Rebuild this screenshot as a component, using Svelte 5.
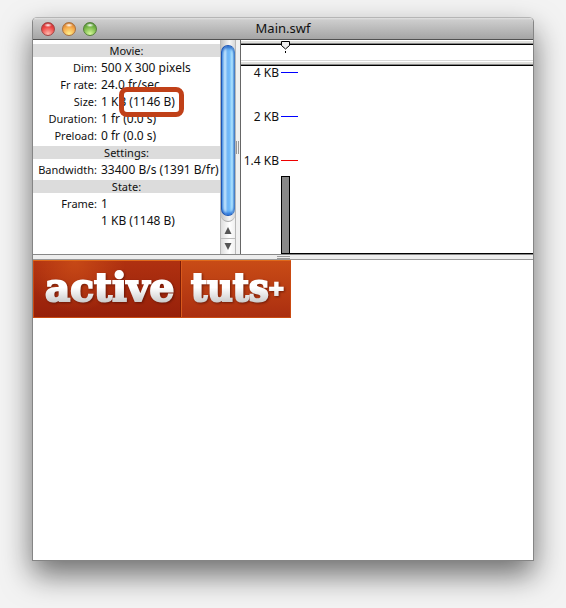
<script lang="ts">
  const groups = [
    {
      title: 'Movie:',
      rows: [
        { label: 'Dim:', value: '500 X 300 pixels' },
        { label: 'Fr rate:', value: '24.0 fr/sec' },
        { label: 'Size:', value: '1 KB', marked: '(1146 B)' },
        { label: 'Duration:', value: '1 fr (0.0 s)' },
        { label: 'Preload:', value: '0 fr (0.0 s)' }
      ]
    },
    {
      title: 'Settings:',
      rows: [{ label: 'Bandwidth:', value: '33400 B/s (1391 B/fr)' }]
    },
    {
      title: 'State:',
      rows: [
        { label: 'Frame:', value: '1' },
        { label: '', value: '1 KB (1148 B)' }
      ]
    }
  ];

  const scale = [
    { label: '4 KB', limit: false },
    { label: '2 KB', limit: false },
    { label: '1.4 KB', limit: true }
  ];

  // height of each streamed frame, in pixels
  const frames = [78];
</script>

<main class="window">
  <header class="titlebar">
    <div class="lights">
      <button class="light close" aria-label="Close"></button>
      <button class="light minimize" aria-label="Minimize"></button>
      <button class="light zoom" aria-label="Zoom"></button>
    </div>
    <h1>Main.swf</h1>
  </header>

  <div class="profiler">
    <section class="info">
      {#each groups as group}
        <h2>{group.title}</h2>
        <dl>
          {#each group.rows as row}
            <dt>{row.label}</dt>
            <dd>
              {row.value}
              {#if row.marked}
                <span class="marked">{row.marked}</span>
              {/if}
            </dd>
          {/each}
        </dl>
      {/each}
    </section>

    <div class="scrollbar">
      <div class="track">
        <div class="thumb"></div>
      </div>
      <button class="arrow" aria-label="Scroll up">
        <svg width="8" height="7" viewBox="0 0 8 7"><path d="M4 0L7.5 7H.5z" /></svg>
      </button>
      <button class="arrow" aria-label="Scroll down">
        <svg width="8" height="7" viewBox="0 0 8 7"><path d="M4 7L7.5 0H.5z" /></svg>
      </button>
    </div>

    <div class="divider"><span class="grip"></span></div>

    <section class="graph">
      <div class="rule"></div>
      <div class="timeline">
        <svg class="playhead" width="9" height="12" viewBox="0 0 9 12">
          <path d="M.5 .5H8.5V4.5L4.5 8L.5 4.5z" fill="#eee" stroke="#000" />
          <path d="M4.5 10V12" stroke="#000" />
        </svg>
      </div>
      <div class="rule"></div>
      <div class="chart">
        <div class="scale">
          {#each scale as mark}
            <div class="mark">
              <span>{mark.label}</span>
              <i class:limit={mark.limit}></i>
            </div>
          {/each}
        </div>
        <div class="bars">
          {#each frames as height}
            <div class="bar" style:height="{height}px"></div>
          {/each}
          <div class="baseline"></div>
        </div>
      </div>
    </section>
  </div>

  <div class="splitter"><span class="grip"></span></div>

  <div class="stage">
    <svg class="banner" width="258" height="58" viewBox="0 0 258 58" role="img" aria-label="active tuts+">
      <defs>
        <radialGradient id="glow" gradientUnits="userSpaceOnUse" cx="42" cy="2" r="50">
          <stop offset="0" stop-color="#c64816" />
          <stop offset="1" stop-color="#c64816" stop-opacity="0" />
        </radialGradient>
        <linearGradient id="dark" x2="0" y2="1">
          <stop offset="0" stop-color="#b03110" />
          <stop offset="1" stop-color="#96200a" />
        </linearGradient>
        <linearGradient id="light" x2="0" y2="1">
          <stop offset="0" stop-color="#c94c16" />
          <stop offset="1" stop-color="#aa2e10" />
        </linearGradient>
        <linearGradient id="letter" gradientUnits="userSpaceOnUse" x1="0" y1="12" x2="0" y2="43">
          <stop offset="0" stop-color="#fff" />
          <stop offset=".5" stop-color="#fff" />
          <stop offset="1" stop-color="#c9c9c9" />
        </linearGradient>
      </defs>
      <rect width="148" height="58" fill="url(#dark)" />
      <rect width="148" height="58" fill="url(#glow)" />
      <rect x="148" width="110" height="58" fill="url(#light)" />
      <path d="M147.5 0V58" stroke="#7c1a06" />
      <path d="M148.5 0V58" stroke="#d95a1c" />
      <rect x=".5" y=".5" width="257" height="57" fill="none" stroke="#c94a12" />
      <path d="M0 .5H258" stroke="#e06a1c" />
      <g class="letters">
        <text class="active" x="12" y="41">active</text>
        <text class="tuts" x="158" y="41">tuts</text>
        <text class="plus" x="235" y="35">+</text>
      </g>
    </svg>
  </div>
</main>

<style>
  :global(body) {
    background: #f3f3f3;
  }

  .window {
    margin: 17px 32px 47px;
    border: 1px solid #858585;
    border-top-color: #b5b5b5;
    border-radius: 5px 5px 0 0;
    background: #fff;
    box-shadow: 0 14px 30px rgba(0, 0, 0, 0.55);
    color: #111;
    font: 12px/17px "Noto Sans", sans-serif;
  }

  .titlebar {
    display: grid;
    grid-template-columns: 1fr auto 1fr;
    align-items: center;
    height: 21px;
    padding: 0 8px;
    border-bottom: 1px solid #515151;
    border-radius: 4px 4px 0 0;
    background: linear-gradient(#e2e2e2, #cdcdcd 2px, #a5a5a5);
  }

  h1 {
    margin: 0;
    font-size: 13px;
    font-weight: 400;
  }

  .lights {
    display: flex;
    gap: 7px;
  }

  .light {
    width: 14px;
    height: 14px;
    padding: 0;
    border: 1px solid;
    border-radius: 50%;
  }

  .close {
    border-color: #a04444;
    background: radial-gradient(ellipse 4px 2px at 50% 18%, #fff, transparent), radial-gradient(circle at 50% 90%, #ffb9ad, #ee4a48 55%, #b91d22);
  }

  .minimize {
    border-color: #a9713f;
    background: radial-gradient(ellipse 4px 2px at 50% 18%, #fff, transparent), radial-gradient(circle at 50% 90%, #fff08c, #f5a94a 55%, #c4691f);
  }

  .zoom {
    border-color: #56803c;
    background: radial-gradient(ellipse 4px 2px at 50% 18%, #fff, transparent), radial-gradient(circle at 50% 90%, #d5f89a, #7cbb4b 55%, #40832a);
  }

  .profiler {
    display: flex;
    height: 214px;
  }

  .info {
    flex: none;
    width: 187px;
    padding-top: 2px;
    box-sizing: border-box;
  }

  h2 {
    margin: 2px 0;
    background: #dcdcdc;
    font-size: 11px;
    font-weight: 400;
    line-height: 13px;
    text-align: center;
  }

  dl {
    display: grid;
    grid-template-columns: 64px 1fr;
    column-gap: 4px;
    margin: 0;
    white-space: nowrap;
  }

  dt {
    font-size: 11px;
    text-align: right;
  }

  dd {
    margin: 0;
  }

  .marked {
    position: relative;
  }

  .marked::after {
    content: "";
    position: absolute;
    inset: -6px -9px -7px -10px;
    border: 5px solid #c04018;
    border-radius: 8px;
  }

  .scrollbar {
    display: flex;
    flex: none;
    flex-direction: column;
    width: 16px;
    box-sizing: border-box;
    border: solid #b8b8b8;
    border-width: 0 1px;
    background: linear-gradient(90deg, #dedede, #fff 60%, #efefef);
  }

  .track {
    flex: 1;
    padding: 5px 0;
    border-bottom: 1px solid #aaa;
    border-radius: 0 0 7px 7px;
    background: linear-gradient(90deg, #c4c4c4, #f5f5f5 60%, #d8d8d8);
  }

  .thumb {
    height: 100%;
    box-sizing: border-box;
    border: 1px solid #1c55b4;
    border-right-color: #4a7fc4;
    border-radius: 7px;
    background: linear-gradient(90deg, #5aa0ea, #c4e4fc 25%, #74b8f6 45%, #6cb8fa 60%, #b4e6ff 85%, #6aa8e4);
    box-shadow: inset 0 3px 3px -1px #2b6bc8, inset 0 -3px 3px -1px #2670d8;
  }

  .arrow {
    display: flex;
    align-items: center;
    justify-content: center;
    height: 16px;
    padding: 0;
    border: 0;
    background: none;
    fill: #555;
  }

  .arrow + .arrow {
    border-top: 1px solid #bbb;
  }

  .divider {
    display: flex;
    flex: none;
    align-items: center;
    width: 4px;
    border-right: 1px solid #666;
    background: #f0f0f0;
  }

  .divider .grip {
    width: 3px;
    height: 13px;
    box-sizing: border-box;
    border: solid #999;
    border-width: 0 1px;
  }

  .graph {
    display: flex;
    flex: 1;
    flex-direction: column;
    min-width: 0;
  }

  .rule {
    flex: none;
    height: 2px;
    border-top: 1px solid #fff;
    border-bottom: 1px solid #888;
    background: #dfdfdc;
    box-shadow: 0 1px #000;
  }

  .timeline {
    flex: none;
    height: 16px;
    padding-left: 40px;
    border-bottom: 1px solid #d8d8d8;
  }

  /* the marker overlaps the rule above the timeline */
  .playhead {
    position: relative;
    top: -3px;
    display: block;
  }

  .chart {
    display: flex;
    flex: 1;
    flex-direction: column;
    justify-content: space-between;
    padding-top: 1px;
  }

  .scale {
    display: grid;
    gap: 31px;
  }

  .mark {
    display: flex;
    gap: 2px;
    align-items: center;
    line-height: 13px;
  }

  .mark span {
    width: 38px;
    text-align: right;
    white-space: nowrap;
  }

  .mark i {
    width: 17px;
    height: 1px;
    background: #00f;
  }

  .mark .limit {
    background: #e00;
  }

  .bars {
    display: flex;
    align-items: flex-end;
    padding-left: 40px;
  }

  .bar {
    width: 9px;
    box-sizing: border-box;
    border: 1px solid #000;
    background: #888;
  }

  .baseline {
    flex: 1;
    height: 1px;
    background: #000;
  }

  .splitter {
    display: flex;
    align-items: center;
    justify-content: center;
    height: 4px;
    border-top: 1px solid #888;
    border-bottom: 1px solid #999;
    background: #eee;
  }

  .splitter .grip {
    width: 13px;
    height: 1px;
    border: solid #999;
    border-width: 1px 0;
  }

  .stage {
    aspect-ratio: 5 / 3;
  }

  .banner {
    display: block;
  }

  .letters {
    fill: url(#letter);
    stroke: url(#letter);
    stroke-width: 2px;
    font-weight: 700;
    filter: drop-shadow(1px 1px 1px rgba(70, 10, 0, 0.6));
  }

  .active {
    font-family: "DejaVu Serif", serif;
    font-size: 39px;
  }

  .tuts {
    font-family: "DejaVu Serif Condensed", "DejaVu Serif", serif;
    font-size: 39px;
  }

  .plus {
    font-family: "DejaVu Sans", sans-serif;
    font-size: 20px;
  }
</style>
